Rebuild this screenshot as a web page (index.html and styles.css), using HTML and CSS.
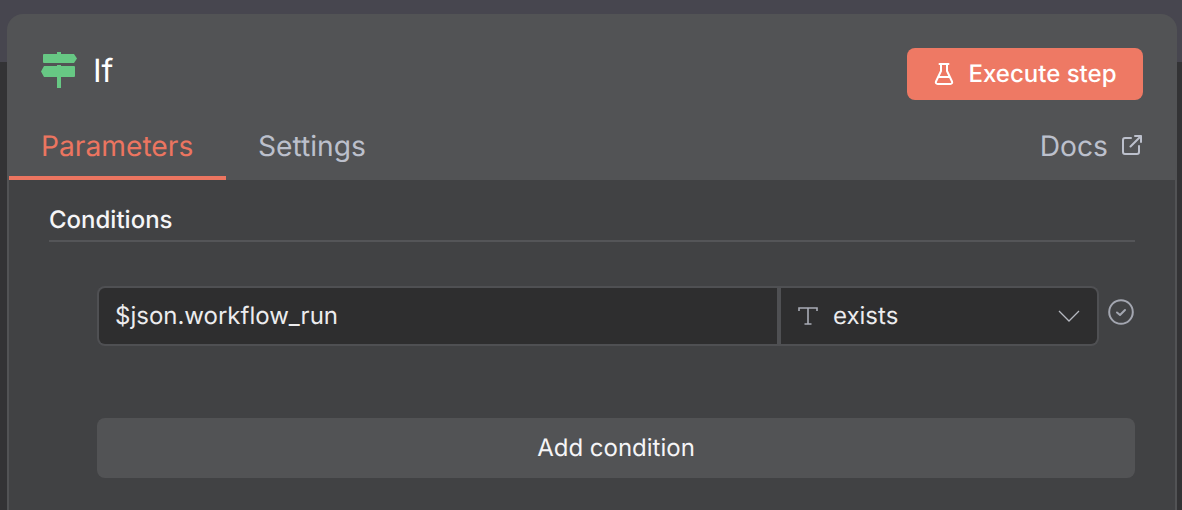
FILE: index.html
```html
<!DOCTYPE html>
<html lang="en">
<head>
<meta charset="utf-8">
<title>If</title>
<link rel="stylesheet" href="styles.css">
</head>
<body>
<div class="backdrop"><div class="backdrop-top"></div></div>
<main class="panel">
  <header class="head">
    <div class="title-row">
      <div class="title">
        <svg class="sign" width="36" height="36" viewBox="0 0 36 36" aria-hidden="true">
          <path fill="#67c884" d="M16 0h4v2h13l3 4.500-3 4.500H3a1 1 0 0 1-1-1V3a1 1 0 0 1 1-1h13zM16 13h4v1h13a1 1 0 0 1 1 1v9a1 1 0 0 1-1 1H3l-3-5.500L3 14h13zM16 25h4v11h-4z"/>
        </svg>
        <span class="title-text">If</span>
      </div>
      <button class="exec">
        <svg width="20" height="24" viewBox="0 0 20 24" fill="none" stroke="#fff" stroke-width="2" stroke-linecap="round" stroke-linejoin="round" aria-hidden="true">
          <path d="M5.500 2h9M7 2v7L2 19.500c-.6 1.400.2 2.500 1.700 2.500h12.600c1.500 0 2.300-1.100 1.700-2.500L13 9V2M4.500 15h11"/>
        </svg>
        <span class="exec-text">Execute step</span>
      </button>
    </div>
    <nav class="tabs">
      <a class="tab active">Parameters</a>
      <a class="tab">Settings</a>
      <a class="docs">Docs
        <svg width="20" height="20" viewBox="0 0 20 20" fill="none" stroke="#bcc0cc" stroke-width="2" stroke-linecap="round" stroke-linejoin="round" aria-hidden="true">
          <path d="M9 3H3a2 2 0 0 0-2 2v12a2 2 0 0 0 2 2h12a2 2 0 0 0 2-2v-6M8.500 11.500 19 1M13 1h6v6"/>
        </svg>
      </a>
    </nav>
  </header>
  <section class="body">
    <h2 class="section-title">Conditions</h2>
    <div class="cond">
      <div class="inputs">
        <div class="field">$json.workflow_run</div>
        <div class="select">
          <svg class="t-icon" width="20" height="20" viewBox="0 0 20 20" fill="none" stroke="#a9acb6" stroke-width="1.600" aria-hidden="true">
            <path d="M1 5V2h18v3M10 2v16M6.500 18h7"/>
          </svg>
          <span class="select-text">exists</span>
          <svg class="chev" width="22" height="12" viewBox="0 0 22 12" fill="none" stroke="#b5b8c0" stroke-width="1.300" aria-hidden="true">
            <path d="M1 1l10 10L21 1"/>
          </svg>
        </div>
      </div>
      <svg class="check" width="26" height="26" viewBox="0 0 26 26" fill="none" stroke="#a3a6b0" stroke-width="2" stroke-linecap="round" stroke-linejoin="round" aria-hidden="true">
        <circle cx="13" cy="13" r="11.800"/>
        <path d="M9 13.500l3 2.500 5-5"/>
      </svg>
    </div>
    <button class="add"><span class="add-text">Add condition</span></button>
  </section>
</main>
</body>
</html>
```
FILE: styles.css
```css
* { box-sizing: border-box; }
html, body { margin: 0; height: 510px; overflow: hidden; }
body {
  position: relative;
  background: #333335;
  font-family: Inter, "Liberation Sans", sans-serif;
  color: #f5f5f7;
  text-rendering: geometricPrecision;
}
.backdrop { position: absolute; inset: 0; z-index: 0; }
.backdrop-top { height: 62px; background: #47464f; }
.panel {
  position: relative;
  z-index: 1;
  margin: 14px 5px 0 7px;
  height: 496px;
  display: flex;
  flex-direction: column;
  border-radius: 16px 16px 0 0;
  background: #525355;
  overflow: hidden;
}
.head { height: 166px; padding: 0 2px; flex: none; }
.title-row {
  display: flex;
  justify-content: space-between;
  align-items: flex-start;
  padding: 34px 32px 0 32px;
  height: 113px;
}
.title { display: flex; align-items: center; gap: 16px; height: 44px; }
.sign { display: block; }
.title-text { font-size: 32px; font-weight: 400; color: #fff; }
.exec {
  display: flex;
  align-items: center;
  justify-content: center;
  gap: 15px;
  width: 236px;
  height: 52px;
  border: 0;
  border-radius: 8px;
  background: #ee7964;
  color: #fff;
  font: 500 24px Inter, "Liberation Sans", sans-serif;
  text-rendering: geometricPrecision;
}
.exec-text { padding-bottom: 2px; }
.tabs { display: flex; height: 53px; align-items: flex-start; }
.tab {
  padding: 0 32px;
  height: 53px;
  line-height: 38px;
  font-size: 28.2px;
  font-weight: 400;
  color: #bcc0cc;
}
.tab.active {
  width: 217px;
  color: #ec7560;
  border-bottom: 4px solid #ec7560;
  padding-right: 0;
}
.docs {
  margin-left: auto;
  display: flex;
  align-items: flex-start;
  gap: 14px;
  line-height: 38px;
  font-size: 28.2px;
  color: #bcc0cc;
  padding-right: 33px;
}
.docs svg { margin-top: 8px; }
.body {
  flex: 1;
  margin: 0 2px;
  background: #414244;
  padding: 22px 40px 0;
}
.section-title {
  margin: 0;
  height: 40px;
  font-size: 24px;
  line-height: 35px;
  font-weight: 500;
  color: #f5f5f7;
  border-bottom: 2px solid #545558;
}
.cond { display: flex; gap: 9px; margin: 44px 0 0 48px; align-items: flex-start; }
.inputs {
  display: flex;
  width: 1002px;
  height: 60px;
  background: #4f5053;
  border-radius: 8px;
  padding: 2px;
  gap: 4px;
}
.field, .select {
  background: #2e2e2f;
  font-size: 24px;
  line-height: 56px;
  height: 56px;
}
.field { width: 678px; padding-left: 16px; border-radius: 6px 0 0 6px; color: #ececee; }
.select {
  flex: 1;
  display: flex;
  align-items: center;
  padding: 0 17px 0 17px;
  border-radius: 0 6px 6px 0;
}
.select-text { margin-left: 15px; flex: 1; color: #ececee; }
.t-icon, .chev, .check { display: block; flex: none; }
.check { margin-top: 13px; }
.add {
  display: block;
  width: 1038px;
  height: 60px;
  margin: 72px 0 0 48px;
  border: 0;
  border-radius: 8px;
  background: #525355;
  color: #f5f5f7;
  font: 400 24px Inter, "Liberation Sans", sans-serif;
  text-rendering: geometricPrecision;
}
.add-text { display: block; padding-bottom: 2px; }
```
